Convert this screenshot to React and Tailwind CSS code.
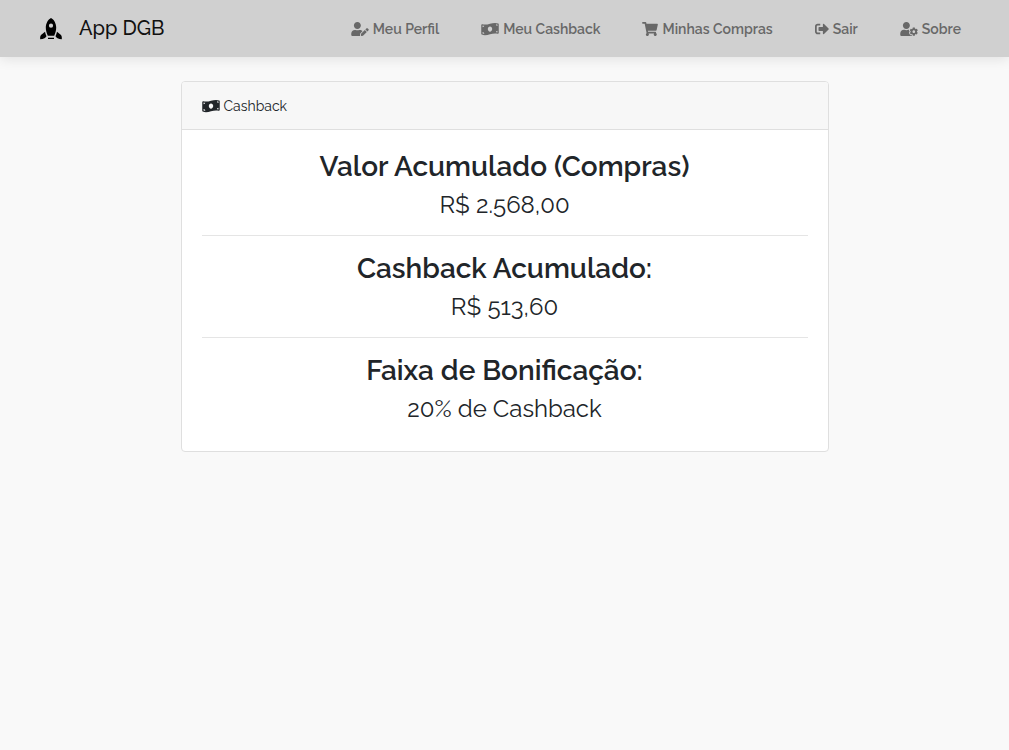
import {
  FaUserEdit,
  FaMoneyBillWave,
  FaShoppingCart,
  FaSignOutAlt,
  FaUserCog,
} from "react-icons/fa";

const links = [
  { label: "Meu Perfil", Icon: FaUserEdit, size: "w-[18px]" },
  { label: "Meu Cashback", Icon: FaMoneyBillWave, size: "w-[18px]" },
  { label: "Minhas Compras", Icon: FaShoppingCart, size: "w-4" },
  { label: "Sair", Icon: FaSignOutAlt, size: "w-3.5" },
  { label: "Sobre", Icon: FaUserCog, size: "w-[18px]" },
];

const totals = [
  { title: "Valor Acumulado (Compras)", value: "R$ 2.568,00" },
  { title: "Cashback Acumulado:", value: "R$ 513,60" },
  { title: "Faixa de Bonificação:", value: "20% de Cashback" },
];

function Rocket() {
  return (
    <svg viewBox="0 0 22 22" className="h-[22px] w-[22px] fill-black" aria-hidden="true">
      <path
        fillRule="evenodd"
        d="M11 0C8 1.500 5.800 5.500 5.800 9.600c0 3.100.8 5.800 2 8.100h6.400c1.200-2.300 2-5 2-8.100C16.200 5.500 14 1.500 11 0Zm0 5.600a2.100 2.100 0 1 1 0 4.200 2.100 2.100 0 0 1 0-4.200Z"
      />
      <path d="M5 13.800 1.300 16.700C.300 17.800 0 19 .200 21.300c1.600-.2 3.100-.7 4.800-1.400l1.500-1.700c-.7-1.400-1.200-2.700-1.500-4.400ZM17 13.800l3.700 2.900c1 1.100 1.300 2.300 1.100 4.600-1.600-.2-3.100-.7-4.800-1.400l-1.500-1.700c.7-1.400 1.200-2.700 1.500-4.400ZM8 19.700h6v1.400H8Z" />
    </svg>
  );
}

export default function App() {
  return (
    <div className="min-h-screen bg-[#f9f9f9] font-['Raleway','Lato',sans-serif] text-[14px] leading-6 text-[#212529]">
      <nav className="flex h-[57px] items-center justify-between bg-[#d0d0d0] pr-12 pl-10 shadow-[0_2px_12px_rgba(0,0,0,0.1)]">
        <a href="#" className="flex items-center gap-[17px] text-[20px] leading-[25px] font-medium text-[#111111]">
          <Rocket />
          App DGB
        </a>
        <ul className="flex gap-[42px]">
          {links.map(({ label, Icon, size }) => (
            <li key={label}>
              <a href="#" className="flex items-center gap-1 font-semibold text-[#686868]">
                <Icon className={`h-3.5 ${size}`} aria-hidden="true" />
                {label}
              </a>
            </li>
          ))}
        </ul>
      </nav>
      <main className="mx-auto mt-6 w-full max-w-[648px]">
        <section className="overflow-hidden rounded border border-[#dfdfdf] bg-white">
          <header className="flex h-12 items-center gap-1 border-b border-[#dfdfdf] bg-[#f7f7f7] px-5">
            <FaMoneyBillWave className="h-3.5 w-[18px]" aria-hidden="true" />
            Cashback
          </header>
          <div className="divide-y divide-[#e5e5e5] px-5 pt-1 pb-3 text-center">
            {totals.map(({ title, value }) => (
              <div key={title} className="py-4">
                <h3 className="mb-1.5 text-[28px] leading-[34px] font-semibold">{title}</h3>
                <p className="text-[24px] leading-[29px]">{value}</p>
              </div>
            ))}
          </div>
        </section>
      </main>
    </div>
  );
}
